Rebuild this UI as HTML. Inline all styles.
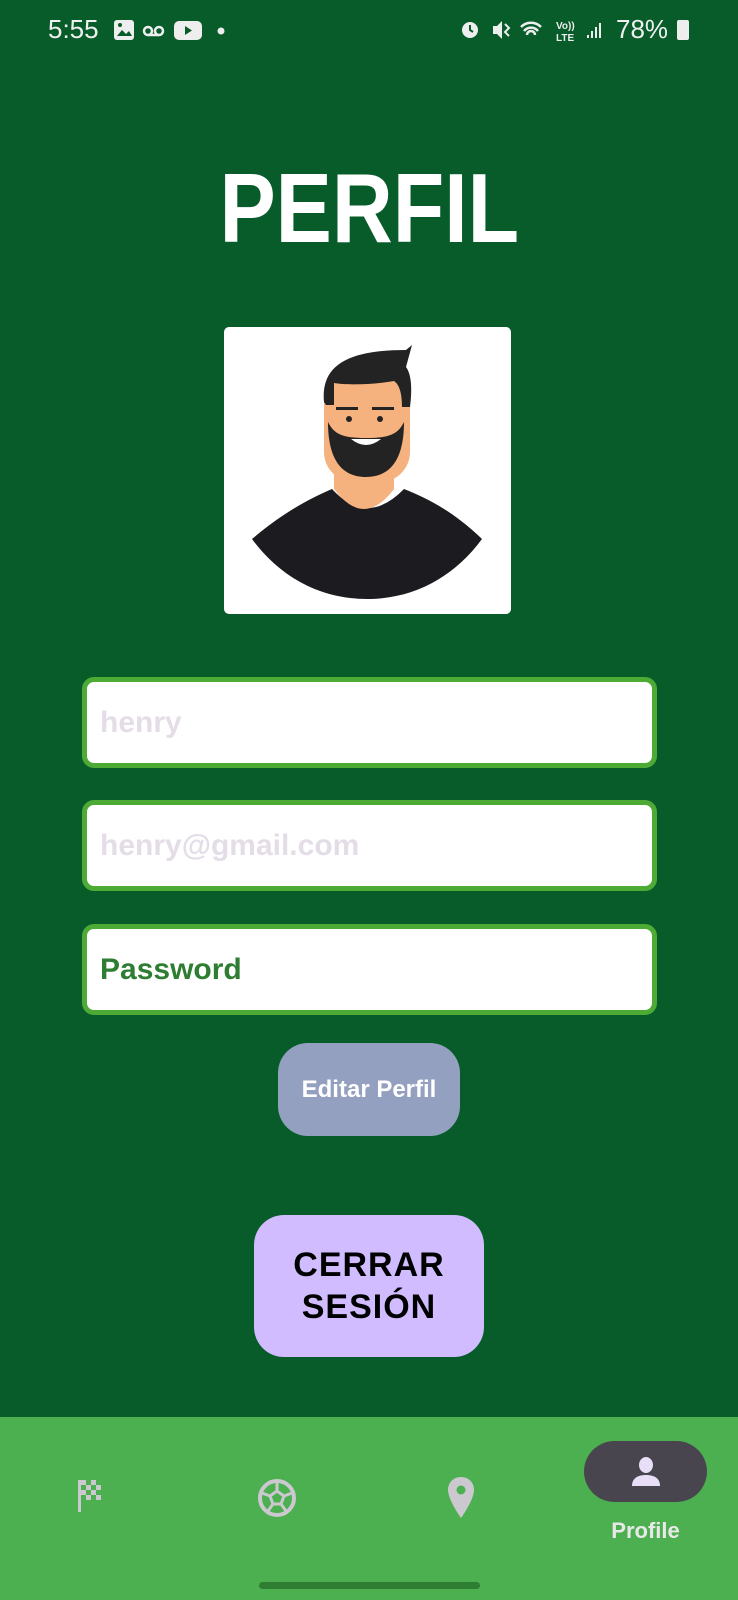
<!DOCTYPE html>
<html><head><meta charset="utf-8"><style>
*{margin:0;padding:0;box-sizing:border-box}
body{width:738px;height:1600px;background:#075c2a;position:relative;overflow:hidden;font-family:"Liberation Sans","DejaVu Sans",sans-serif}
.abs{position:absolute}
.inp{position:absolute;left:82px;width:575px;height:91px;background:#fff;border:5px solid #4caa35;border-radius:12px;font-weight:bold;font-size:30px;padding-left:13px;line-height:81px}
</style></head><body>
<div class="abs" style="left:48px;top:14px;color:#f0f0f0;font-size:26px">5:55</div>
<svg class="abs" style="left:112px;top:18px" width="114" height="24" viewBox="0 0 114 24">
<rect x="2" y="2" width="20" height="20" rx="3" fill="#eee"/><path d="M5 18l5-6 4 4 3-3 3 5z" fill="#075c2a"/><circle cx="8" cy="7" r="2" fill="#075c2a"/>
<circle cx="36" cy="13" r="4" fill="none" stroke="#eee" stroke-width="2.5"/><circle cx="47" cy="13" r="4" fill="none" stroke="#eee" stroke-width="2.5"/><path d="M36 17h11" stroke="#eee" stroke-width="2.5"/>
<rect x="62" y="3" width="28" height="19" rx="5" fill="#eee"/><path d="M73 8v9l7-4.5z" fill="#075c2a"/>
<circle cx="109" cy="13" r="3.5" fill="#eee"/></svg>
<svg class="abs" style="left:458px;top:16px" width="180" height="28" viewBox="0 0 180 28">
<circle cx="12" cy="14" r="8" fill="#eee"/><path d="M12 9v5l3 2" stroke="#075c2a" stroke-width="2" fill="none"/>
<path d="M35 10h4l5-5v18l-5-5h-4z" fill="#eee"/><path d="M47 8l4 4-4 4 4 4" stroke="#eee" stroke-width="2" fill="none"/>
<path d="M63 11a14 14 0 0 1 20 0M66 15a9 9 0 0 1 14 0M69 19a4 4 0 0 1 8 0" stroke="#eee" stroke-width="2.5" fill="none"/>
<text x="98" y="13" font-size="10" fill="#eee" font-family="Liberation Sans" font-weight="bold">Vo))</text><text x="98" y="25" font-size="10" fill="#eee" font-family="Liberation Sans" font-weight="bold">LTE</text>
<path d="M130 22v-3M134 22v-7M138 22v-11M142 22v-15" stroke="#eee" stroke-width="2"/></svg>
<div class="abs" style="left:616px;top:14px;color:#f0f0f0;font-size:26px">78%</div>
<div class="abs" style="left:677px;top:20px;width:12px;height:20px;background:#eee;border-radius:2px"></div>

<div class="abs" style="left:0;width:738px;top:152px;text-align:center;color:#fff;font-size:98px;font-weight:bold;transform:scaleX(0.86);transform-origin:371px 0">PERFIL</div>

<div class="abs" style="left:224px;top:327px;width:287px;height:287px;background:#fff;border-radius:5px;overflow:hidden">
<svg width="287" height="287" viewBox="0 0 287 287">
<path d="M28 212C60 185 85 172 108 162Q143 200 180 162C205 172 230 185 258 212C230 250 190 272 143 272S56 250 28 212z" fill="#1c1c20"/>
<path d="M110 130h60v32q-30 40-60 0z" fill="#f5b27f"/>
<rect x="100" y="45" width="86" height="110" rx="30" fill="#f5b27f"/>
<path d="M100 75c-4-40 30-52 82-52l6-5-6 22c6 8 6 24 4 40h-8c0-12-2-22-8-26-22 4-50 4-60 2v22h-8z" fill="#232323"/>
<path d="M104 95c0 38 14 55 38 55s38-17 38-55c-6 12-14 16-38 16s-32-4-38-16z" fill="#232323"/>
<path d="M127 112q15 12 30 0z" fill="#fff"/>
<rect x="112" y="80" width="22" height="3" fill="#232323"/><rect x="148" y="80" width="22" height="3" fill="#232323"/>
<circle cx="125" cy="92" r="3" fill="#232323"/><circle cx="156" cy="92" r="3" fill="#232323"/>
</svg></div>

<div class="inp" style="top:677px;color:#e4dde8">henry</div>
<div class="inp" style="top:800px;color:#e4dde8">henry@gmail.com</div>
<div class="inp" style="top:924px;color:#2e7d32">Password</div>

<div class="abs" style="left:278px;top:1043px;width:182px;height:93px;background:#94a0c0;border-radius:30px;color:#fff;font-weight:bold;font-size:24px;text-align:center;line-height:93px">Editar Perfil</div>
<div class="abs" style="left:254px;top:1215px;width:230px;height:142px;background:#d0bcfe;border-radius:30px;color:#000;font-weight:bold;font-size:34px;text-align:center;padding-top:29px;line-height:42px;letter-spacing:1px">CERRAR<br>SESIÓN</div>

<div class="abs" style="left:0;top:1417px;width:738px;height:183px;background:#4caf50"></div>
<svg class="abs" style="left:76px;top:1478px" width="30" height="36" viewBox="0 0 30 36">
<rect x="2" y="2" width="3" height="32" fill="#ccc8d0"/>
<g fill="#ccc8d0"><rect x="5" y="2" width="5" height="5"/><rect x="15" y="2" width="5" height="5"/><rect x="10" y="7" width="5" height="5"/><rect x="20" y="7" width="5" height="5"/><rect x="5" y="12" width="5" height="5"/><rect x="15" y="12" width="5" height="5"/><rect x="10" y="17" width="5" height="5"/><rect x="20" y="17" width="5" height="5"/></g></svg>
<svg class="abs" style="left:256px;top:1477px" width="42" height="42" viewBox="0 0 42 42">
<circle cx="21" cy="21" r="17" fill="none" stroke="#ccc8d0" stroke-width="4"/><path d="M21 14l7 5-3 8h-8l-3-8z" fill="none" stroke="#ccc8d0" stroke-width="3"/>
<path d="M21 14V5M28 19l8-3M25 27l5 7M17 27l-5 7M14 19l-8-3" stroke="#ccc8d0" stroke-width="3"/></svg>
<svg class="abs" style="left:446px;top:1475px" width="30" height="46" viewBox="0 0 30 46">
<path d="M15 2C7 2 2 8 2 15c0 10 13 28 13 28s13-18 13-28C28 8 23 2 15 2z" fill="#ccc8d0"/><circle cx="15" cy="15" r="4.5" fill="#4caf50"/></svg>
<div class="abs" style="left:584px;top:1441px;width:123px;height:61px;background:#49454f;border-radius:31px"></div>
<svg class="abs" style="left:629px;top:1456px" width="34" height="32" viewBox="0 0 34 32">
<ellipse cx="17" cy="9" rx="7" ry="8" fill="#e8def8"/><path d="M3 30c0-8 6-11 14-11s14 3 14 11z" fill="#e8def8"/></svg>
<div class="abs" style="left:584px;top:1518px;width:123px;text-align:center;color:#e8e8e8;font-weight:bold;font-size:22px">Profile</div>
<div class="abs" style="left:259px;top:1582px;width:221px;height:7px;background:#2e7d32;border-radius:4px"></div>
</body></html>
